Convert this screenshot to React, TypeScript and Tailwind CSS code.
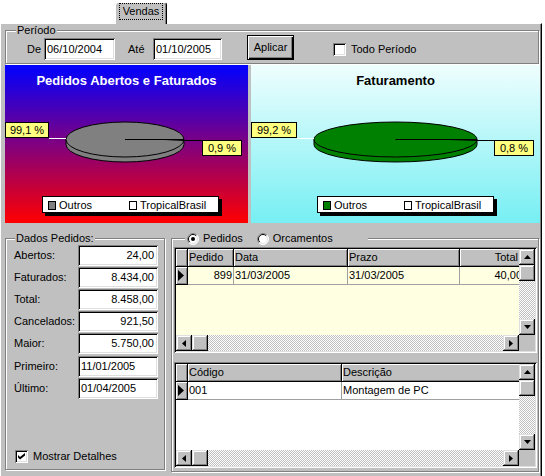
import React from "react";

// win95-ish bevels
const raised =
  "shadow-[inset_-1px_-1px_0_#000,inset_1px_1px_0_#dfdfdf,inset_-2px_-2px_0_#808080,inset_2px_2px_0_#fff]";
const sunken =
  "shadow-[inset_1px_1px_0_#808080,inset_-1px_-1px_0_#fff,inset_2px_2px_0_#000,inset_-2px_-2px_0_#dfdfdf]";
const etched = "border border-[#808080] shadow-[inset_1px_1px_0_#fff,1px_1px_0_#fff]";
const checker =
  "bg-[image:repeating-conic-gradient(#c0c0c0_0_25%,#ffffff_0_50%)] bg-[length:2px_2px]";

const FONT = "'Liberation Sans', Arial, sans-serif";

type Dir = "up" | "down" | "left" | "right";

const Arrow = ({ dir }: { dir: Dir }) => {
  const vertical = dir === "up" || dir === "down";
  const pts = {
    up: "0,4 3.5,0 7,4",
    down: "0,0 7,0 3.5,4",
    left: "4,0 4,7 0,3.5",
    right: "0,0 0,7 4,3.5",
  }[dir];
  return (
    <svg width={vertical ? 7 : 4} height={vertical ? 4 : 7} viewBox={vertical ? "0 0 7 4" : "0 0 4 7"}>
      <polygon points={pts} fill="#000" />
    </svg>
  );
};

const ScrollBtn = ({ dir }: { dir?: Dir }) => (
  <div className={`w-[16px] h-[16px] flex-none bg-[#c0c0c0] flex items-center justify-center ${raised}`}>
    {dir && <Arrow dir={dir} />}
  </div>
);

const Check = ({ checked }: { checked?: boolean }) => (
  <div className={`w-[13px] h-[13px] flex-none bg-white ${sunken} flex items-center justify-center`}>
    {checked && (
      <svg width="7" height="7" viewBox="0 0 7 7">
        <polygon points="0,2 2,4 7,0 7,2.5 2,6.5 0,4.5" fill="#000" />
      </svg>
    )}
  </div>
);

const Radio = ({ checked, className = "" }: { checked?: boolean; className?: string }) => (
  <svg width="12" height="12" viewBox="0 0 12 12" className={className}>
    <circle cx="6" cy="6" r="5.5" fill="#fff" />
    <path d="M2.1 9.9 A5.5 5.5 0 0 1 9.9 2.1" stroke="#808080" fill="none" />
    <path d="M9.9 2.1 A5.5 5.5 0 0 1 2.1 9.9" stroke="#fff" fill="none" />
    <path d="M2.8 9.2 A4.5 4.5 0 0 1 9.2 2.8" stroke="#000" fill="none" />
    <path d="M9.2 2.8 A4.5 4.5 0 0 1 2.8 9.2" stroke="#dfdfdf" fill="none" />
    {checked && <circle cx="6" cy="6" r="2" fill="#000" />}
  </svg>
);

type ChartProps = {
  w: number;
  bg: string;
  title: string;
  titleFill: string;
  pieFill: string;
  cx: number;
  rx: number;
  left: { x: number; w: number; text: string };
  right: { x: number; w: number; text: string };
  legendX: number;
};

const Chart = ({ w, bg, title, titleFill, pieFill, cx, rx, left, right, legendX }: ChartProps) => {
  const cy = 74.5;
  const ry = 17.5;
  const d = 5;
  return (
    <div className={`h-[158px] flex-none ${bg}`}>
      <svg width={w} height={158} className="block" fontFamily={FONT}>
        <text x={w / 2} y={20} textAnchor="middle" fontWeight="bold" fontSize="13" fill={titleFill}>
          {title}
        </text>

        {/* pie */}
        <path
          d={`M${cx - rx},${cy} L${cx - rx},${cy + d} A${rx},${ry} 0 0 0 ${cx + rx},${cy + d} L${cx + rx},${cy} Z`}
          fill={pieFill}
          stroke="#000"
        />
        <ellipse cx={cx} cy={cy} rx={rx} ry={ry} fill={pieFill} stroke="#000" />
        <line x1={cx} y1={cy} x2={cx + rx} y2={cy} stroke="#000" />
        <polygon points={`${cx + rx * 0.5},${cy} ${cx + rx},${cy - 0.5} ${cx + rx},${cy + 1.5}`} fill="#000" />

        {/* labels */}
        <line x1={left.x + left.w} y1={73.5} x2={cx - rx} y2={73.5} stroke="#fff" />
        <rect x={left.x + 0.5} y={57.5} width={left.w - 1} height={15} fill="#ffff80" stroke="#000" />
        <text x={left.x + left.w / 2} y={69} textAnchor="middle" fontSize="11">
          {left.text}
        </text>
        <line x1={cx + rx} y1={75.5} x2={right.x} y2={75.5} stroke="#000" />
        <rect x={right.x + 0.5} y={75.5} width={right.w - 1} height={15} fill="#ffff80" stroke="#000" />
        <text x={right.x + right.w / 2} y={87} textAnchor="middle" fontSize="11">
          {right.text}
        </text>

        {/* legend */}
        <rect x={legendX + 3} y={134} width={177} height={17} fill="#000" />
        <rect x={legendX + 0.5} y={131.5} width={176} height={16} fill="#fff" stroke="#000" />
        <rect x={legendX + 6.5} y={136.5} width={7} height={8} fill={pieFill} stroke="#000" />
        <text x={legendX + 17} y={144} fontSize="11">
          Outros
        </text>
        <rect x={legendX + 87.5} y={136.5} width={7} height={8} fill="#fff" stroke="#000" />
        <text x={legendX + 98} y={144} fontSize="11">
          TropicalBrasil
        </text>
      </svg>
    </div>
  );
};

type Col = { title: string; w: string; right?: boolean; dataRight?: boolean };

const Grid = ({
  cols,
  row,
  bg,
  className = "",
}: {
  cols: Col[];
  row: string[];
  bg: string;
  className?: string;
}) => (
  <div className={`w-[363px] h-[106px] p-[2px] ${sunken} bg-[#c0c0c0] flex flex-col ${className}`}>
    <div className="flex flex-1 min-h-0">
      <div className={`flex-1 min-w-0 overflow-hidden ${bg}`}>
        <div className="flex w-max">
          <div className="w-[12px] h-[18px] flex-none bg-[#c0c0c0] border-r border-b border-black shadow-[inset_1px_1px_0_#fff,inset_-1px_-1px_0_#808080]" />
          {cols.map((c) => (
            <div
              key={c.title}
              className={`${c.w} h-[18px] flex-none bg-[#c0c0c0] border-r border-b border-black shadow-[inset_1px_1px_0_#fff,inset_-1px_-1px_0_#808080] leading-[17px] whitespace-nowrap ${
                c.right ? "text-right pr-[5px]" : "pl-[1px]"
              }`}
            >
              {c.title}
            </div>
          ))}
        </div>
        <div className="flex w-max">
          <div className="w-[12px] h-[18px] flex-none bg-[#c0c0c0] border-r border-b border-black shadow-[inset_1px_1px_0_#fff,inset_-1px_-1px_0_#808080] flex items-center pl-[2px]">
            <svg width="6" height="11" viewBox="0 0 6 11">
              <polygon points="0,0 0,11 6,5.5" fill="#000" />
            </svg>
          </div>
          {row.map((v, i) => (
            <div
              key={i}
              className={`${cols[i].w} h-[18px] flex-none border-r border-b border-[#a0a0a0] leading-[17px] whitespace-nowrap ${
                cols[i].dataRight ? "text-right pr-[1px]" : "pl-[1px]"
              }`}
            >
              {v}
            </div>
          ))}
        </div>
      </div>
      <div className="w-[16px] flex-none flex flex-col">
        <ScrollBtn dir="up" />
        <ScrollBtn />
        <div className={`flex-1 ${checker}`} />
        <ScrollBtn dir="down" />
      </div>
    </div>
    <div className="flex h-[16px] flex-none">
      <ScrollBtn dir="left" />
      <ScrollBtn />
      <div className={`flex-1 ${checker}`} />
      <ScrollBtn dir="right" />
      <div className="w-[16px] flex-none bg-[#c0c0c0]" />
    </div>
  </div>
);

const NumField = ({ value, right = true }: { value: string; right?: boolean }) => (
  <div
    className={`w-[80px] h-[21px] bg-white ${sunken} leading-[21px] ${right ? "text-right pr-[4px]" : "pl-[3px]"}`}
  >
    {value}
  </div>
);

const dados = [
  { label: "Abertos:", value: "24,00", mt: "" },
  { label: "Faturados:", value: "8.434,00", mt: "mt-[1px]" },
  { label: "Total:", value: "8.458,00", mt: "mt-[1px]" },
  { label: "Cancelados:", value: "921,50", mt: "mt-[1px]" },
  { label: "Maior:", value: "5.750,00", mt: "mt-[1px]" },
  { label: "Primeiro:", value: "11/01/2005", mt: "mt-[2px]", date: true },
  { label: "Último:", value: "01/04/2005", mt: "mt-[1px]", date: true },
];

export default function App() {
  return (
    <div className="w-[545px] h-[476px] overflow-hidden bg-white font-['Liberation_Sans',Arial,sans-serif] text-[11px] leading-[13px] text-black">
      {/* tab strip */}
      <div className="h-[23px] flex items-start">
        <div className="relative z-10 ml-[115px] mt-[2px] h-[22px] w-[52px] bg-[#c0c0c0] border-l border-t border-white border-r border-r-black rounded-t-[3px] shadow-[inset_-1px_0_0_#808080] flex justify-center">
          <span className="h-[17px] px-[3px] border border-dotted border-black leading-[15px]">Vendas</span>
        </div>
      </div>

      {/* tab page */}
      <div className="w-[542px] h-[453px] bg-[#c0c0c0] border-l border-t border-white border-r border-r-black shadow-[inset_-1px_0_0_#808080] pl-[4px] pr-[1px] pt-[6px]">
        {/* Período */}
        <div className={`relative h-[34px] w-[534px] ${etched} flex items-center pt-[4px]`}>
          <span className="absolute left-[10px] top-[-7px] bg-[#c0c0c0] px-[1px]">Período</span>
          <span className="ml-[21px] w-[17px]">De</span>
          <div className={`w-[71px] h-[22px] bg-white ${sunken} pl-[3px] leading-[22px]`}>06/10/2004</div>
          <span className="ml-[13px] w-[25px]">Até</span>
          <div className={`w-[69px] h-[22px] bg-white ${sunken} pl-[3px] leading-[22px]`}>01/10/2005</div>
          <button
            className={`ml-[25px] w-[47px] h-[25px] bg-[#c0c0c0] border border-black shadow-[inset_1px_1px_0_#fff,inset_-1px_-1px_0_#000,inset_-2px_-2px_0_#808080] text-[11px] -mt-[3px]`}
          >
            Aplicar
          </button>
          <div className="ml-[39px]">
            <Check />
          </div>
          <span className="ml-[5px]">Todo Período</span>
        </div>

        {/* charts */}
        <div className="mt-[1px] flex gap-[3px]">
          <Chart
            w={243}
            bg="w-[243px] bg-[linear-gradient(#0000ff,#ff0000)]"
            title="Pedidos Abertos e Faturados"
            titleFill="#fff"
            pieFill="#808080"
            cx={120}
            rx={59}
            left={{ x: 0, w: 44, text: "99,1 %" }}
            right={{ x: 197, w: 40, text: "0,9 %" }}
            legendX={37}
          />
          <Chart
            w={289}
            bg="w-[289px] bg-[linear-gradient(#effefe,#76eff3)]"
            title="Faturamento"
            titleFill="#000"
            pieFill="#008000"
            cx={144.5}
            rx={81.5}
            left={{ x: 0, w: 46, text: "99,2 %" }}
            right={{ x: 243, w: 40, text: "0,8 %" }}
            legendX={66}
          />
        </div>

        {/* bottom */}
        <div className="mt-[15px] flex gap-[6px] items-start">
          <div className={`relative w-[160px] h-[232px] ${etched} flex flex-col pt-[6px] pl-[8px]`}>
            <span className="absolute left-[9px] top-[-7px] bg-[#c0c0c0] px-[1px]">Dados Pedidos:</span>
            {dados.map((r) => (
              <div key={r.label} className={`flex items-center h-[21px] ${r.mt}`}>
                <span className="w-[64px]">{r.label}</span>
                <NumField value={r.value} right={!r.date} />
              </div>
            ))}
            <div className="mt-auto mb-[6px] ml-[1px] flex items-center">
              <Check checked />
              <span className="ml-[5px]">Mostrar Detalhes</span>
            </div>
          </div>

          <div className={`relative w-[368px] h-[234px] ${etched} pl-[2px] pt-[8px]`}>
            <div className="absolute left-[13px] top-[-7px] w-[183px] h-[13px] bg-[#c0c0c0] flex items-center">
              <Radio checked className="ml-[2px] flex-none" />
              <span className="ml-[4px]">Pedidos</span>
              <Radio className="ml-[14px] flex-none" />
              <span className="ml-[4px]">Orcamentos</span>
            </div>
            <Grid
              bg="bg-[#ffffe1]"
              cols={[
                { title: "Pedido", w: "w-[46px]", dataRight: true },
                { title: "Data", w: "w-[114px]" },
                { title: "Prazo", w: "w-[112px]" },
                { title: "Total", w: "w-[64px]", right: true, dataRight: true },
              ]}
              row={["899", "31/03/2005", "31/03/2005", "40,00"]}
            />
            <Grid
              className="mt-[9px]"
              bg="bg-white"
              cols={[
                { title: "Código", w: "w-[154px]" },
                { title: "Descrição", w: "w-[180px]" },
              ]}
              row={["001", "Montagem de PC"]}
            />
          </div>
        </div>
      </div>
    </div>
  );
}
